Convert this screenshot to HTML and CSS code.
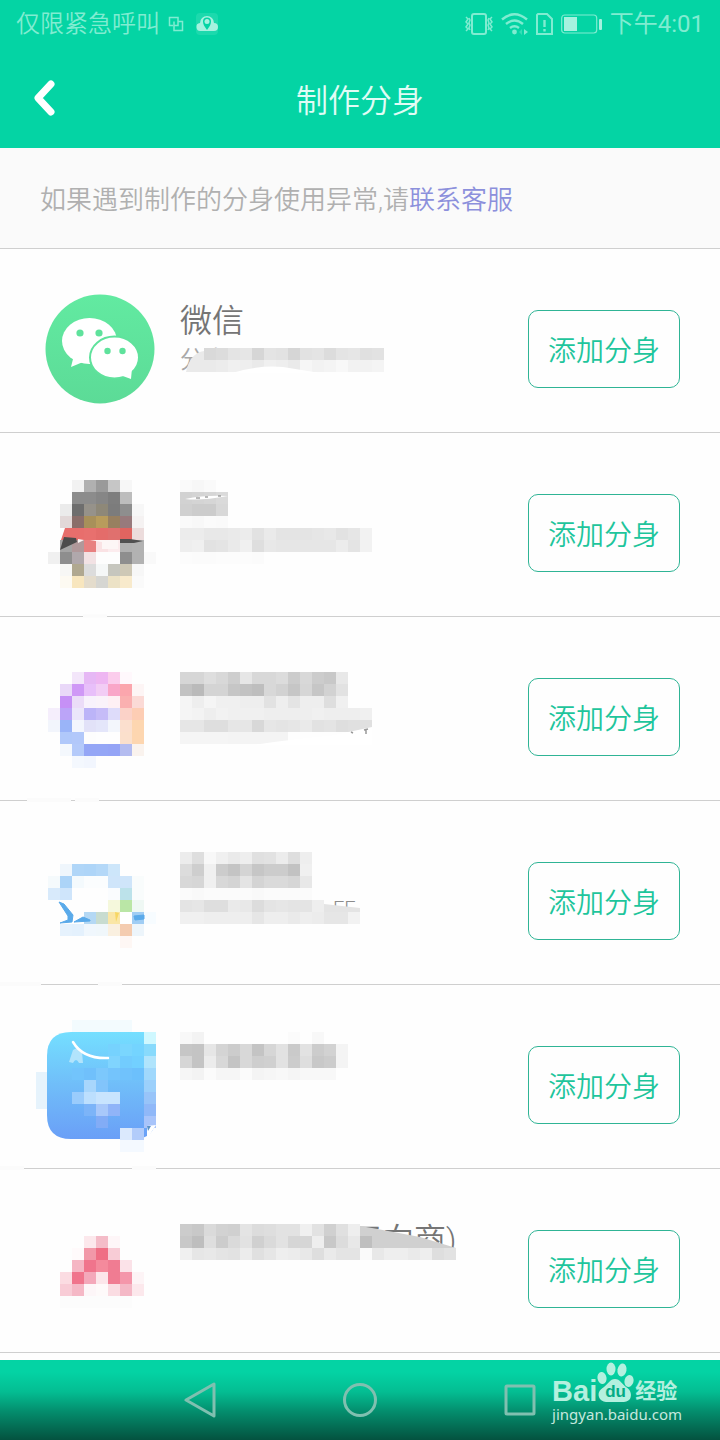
FILE: index.html
```html
<!DOCTYPE html>
<html lang="zh-CN">
<head>
    <meta charset="UTF-8">
    <meta name="viewport" content="width=device-width, initial-scale=1.0">
    <title>制作分身</title>
    <link rel="stylesheet" href="styles.css">
</head>
<body>
    <header class="header">
        <div class="status-bar">
            <span>仅限紧急呼叫</span>
            <svg class="status-copy" width="16" height="16" viewBox="0 0 16 16" fill="none" stroke="currentColor" stroke-width="1.5">
                <path d="M5 9.500H1.500V1.500H10V5.500H14.500V14.500H6V9.500M10 5.500V9.500H6V5.500"/>
            </svg>
            <svg width="22" height="22" viewBox="0 0 22 22">
                <rect width="22" height="22" rx="4" fill="#1cd9ad"/>
                <path d="M5 18a4 4 0 0 1-1-8 7 7 0 0 1 14 0 4 4 0 0 1 0 8z" fill="#a5f2df"/>
                <path d="M11 17C8 13 7 11 7 8.500a4 4 0 0 1 8 0C15 11 14 13 11 17z" fill="#04d4a4"/>
                <circle cx="11" cy="8.500" r="2.500" fill="#a5f2df"/>
            </svg>
            <div class="status-right">
                <svg width="28" height="24" viewBox="0 0 28 24" fill="none" stroke="currentColor" stroke-width="2">
                    <rect x="7" y="2" width="14" height="20" rx="2"/>
                    <path d="M1 5l2 2-2 3 2 2-2 3 2 2-2 2M4 6l1 2-1 3 1 2-1 3 1 2M27 5l-2 2 2 3-2 2 2 3-2 2 2 2M24 6l-1 2 1 3-1 2 1 3-1 2" stroke-width="1.5"/>
                </svg>
                <svg width="27" height="24" viewBox="0 0 27 24" fill="none" stroke="currentColor" stroke-width="2.400">
                    <path d="M1 7.500Q13.500-3 26 7.500M5 12Q13.500 5 22 12M9 16Q13.500 12.500 18 16"/>
                    <circle cx="13.500" cy="20" r="2.400" fill="currentColor" stroke="none"/>
                    <path d="M21 17l-3 3 3 3z" fill="currentColor" stroke="none" opacity=".4"/>
                    <path d="M23 17l4 3-4 3z" fill="currentColor" stroke="none"/>
                </svg>
                <svg width="17" height="24" viewBox="0 0 17 24" fill="none" stroke="currentColor" stroke-width="2">
                    <path d="M2 2H11L16 7V22H1V3z"/>
                    <path d="M8.500 8v7M8.500 17v2.500" stroke-width="2.400"/>
                </svg>
                <svg width="41" height="24" viewBox="0 0 41 24">
                    <rect x=".7" y="3" width="35" height="18" rx="3" fill="none" stroke="currentColor" stroke-width="1.200"/>
                    <rect x="3" y="5" width="13" height="14" fill="#a5f2df"/>
                    <rect x="38" y="7" width="3" height="11" rx="1" fill="#a5f2df"/>
                </svg>
                <span class="time">下午4:01</span>
            </div>
        </div>
        <div class="title-bar">
            <button class="back" aria-label="返回">
                <svg width="24" height="38" viewBox="0 0 24 38" fill="none" stroke="#fff" stroke-width="7" stroke-linecap="round" stroke-linejoin="round">
                    <path d="M18 5L5 19 18 33"/>
                </svg>
            </button>
            <h1>制作分身</h1>
        </div>
    </header>

    <p class="notice">如果遇到制作的分身使用异常,请<a href="#">联系客服</a></p>

    <ul class="app-list">
        <li class="app">
            <svg class="app-icon" viewBox="0 0 132 167">
                <defs>
                    <linearGradient id="green" x2="0" y2="1">
                        <stop offset="0" stop-color="#62eaa1"/>
                        <stop offset="1" stop-color="#5cdb97"/>
                    </linearGradient>
                </defs>
                <circle cx="64" cy="84" r="54.500" fill="url(#green)"/>
                <ellipse cx="53.500" cy="76" rx="27.500" ry="23" fill="#fff"/>
                <path d="M38 90l-3 12 12-5z" fill="#fff"/>
                <ellipse cx="78.500" cy="92.500" rx="24.500" ry="21" fill="#fff" stroke="#5fe29c" stroke-width="2"/>
                <path d="M96 103l-1 11-11-4z" fill="#fff"/>
                <g fill="#5fe29c">
                    <circle cx="44" cy="68" r="3.600"/>
                    <circle cx="63" cy="68" r="3.600"/>
                    <circle cx="71.500" cy="86" r="3.200"/>
                    <circle cx="86.500" cy="86" r="3.200"/>
                </g>
            </svg>
            <div class="app-info">
                <h2>微信</h2>
                <p>分身</p>
                <svg class="cover" viewBox="0 0 300 167">
                    <path d="M6 107Q10 88 24 86H48V107z" fill="#eaeaea"/>
                    <g data-mosaic="wechatText"></g>
                    <path d="M52 108Q78 100 103 102L140 108z" fill="#fff"/>
                </svg>
            </div>
            <button class="add">添加分身</button>
        </li>
        <li class="app">
            <svg class="app-icon" viewBox="0 0 132 167">
                <g data-mosaic="penguin"></g>
                <path d="M24 79H29L24 91z" fill="#fff"/>
                <path d="M29 79H37V91H25z" fill="#e86e6c"/>
                <path d="M28 88L40 89 41 93 24 101z" fill="#4c4c4c"/>
                <path d="M84 90H94L107 92 98 94H84z" fill="#505050"/>
                <path d="M42 90L48 91 42 94zM54 91H82V100H66V93z" fill="#fdf6f6"/>
                <path d="M47 167H71" stroke="#fbfbfb" stroke-width="3"/>
            </svg>
            <div class="app-info">
                <svg class="cover" viewBox="0 0 300 167">
                    <g data-mosaic="penguinText"></g>
                    <path d="M5 50Q20 52 48 47Q25 46 5 50z" fill="#fff"/>
                    <path d="M16 49h4M25 48h3M38 47h3" stroke="#777"/>
                </svg>
            </div>
            <button class="add">添加分身</button>
        </li>
        <li class="app">
            <svg class="app-icon" viewBox="0 0 132 167">
                <g data-mosaic="ring"></g>
                <path d="M-9 167H35M39 167H63" stroke="#fbfbfb" stroke-width="4"/>
            </svg>
            <div class="app-info">
                <svg class="cover" viewBox="0 0 300 167">
                    <g data-mosaic="ringText"></g>
                    <path d="M74 112Q120 105 150 103L192 94V112z" fill="#fff"/>
                    <path d="M171 99l2 1M184 97l4-1M186 97v4" stroke="#999" stroke-width="1.500"/>
                </svg>
            </div>
            <button class="add">添加分身</button>
        </li>
        <li class="app">
            <svg class="app-icon" viewBox="0 0 132 167">
                <g data-mosaic="bubble"></g>
                <path d="M23 85L28 87 37 98 36 105 24 106 32 103 32 99zM38 105L47 100 54 103V104zM98 99L108 98V102L99 103z" fill="#5aaaea" stroke="#5aaaea"/>
                <path d="M79 95l4 1-3 9z" fill="#f6d764"/>
                <path d="M-36 167H5M62 167H86" stroke="#fbfbfb" stroke-width="4"/>
            </svg>
            <div class="app-info">
                <svg class="cover" viewBox="0 0 300 167">
                    <text class="cover-sub" x="153" y="99">FF</text>
                    <g data-mosaic="bubbleText"></g>
                    <path d="M144 87L180 91V95H144z" fill="#e4e4e4"/>
                </svg>
            </div>
            <button class="add">添加分身</button>
        </li>
        <li class="app">
            <svg class="app-icon" viewBox="0 0 132 167">
                <defs>
                    <linearGradient id="blue" x2="0" y2="1">
                        <stop offset="0" stop-color="#74dfff"/>
                        <stop offset=".5" stop-color="#70bdf9"/>
                        <stop offset="1" stop-color="#6a9ff7"/>
                    </linearGradient>
                </defs>
                <path d="M36 19H96V31H36z" fill="#f3fbfe"/>
                <path d="M0 71H12V108H0z" fill="#e6f3fc"/>
                <path d="M35 31H120V114Q120 138 98 138H35Q11 138 11 114V55Q11 31 35 31z" fill="url(#blue)"/>
                <g data-mosaic="dog"></g>
                <path d="M33 61L37 49 41 47 46 51 47 62H43Q40 56 37 62z" fill="#b2e4fc"/>
                <path d="M37 41Q47 58 72 57" fill="none" stroke="#fff" stroke-width="2.500" stroke-linecap="round"/>
                <path d="M111 125L120 124 111 138z" fill="#fff"/>
                <path d="M111 125l4 0-3 5z" fill="#5a92c8"/>
                <path d="M-36 167H-12M96 167H120" stroke="#fbfbfb" stroke-width="4"/>
            </svg>
            <div class="app-info">
                <svg class="cover" viewBox="0 0 300 167">
                    <g data-mosaic="dogText"></g>
                </svg>
            </div>
            <button class="add">添加分身</button>
        </li>
        <li class="app">
            <svg class="app-icon" viewBox="0 0 132 167">
                <g data-mosaic="peak"></g>
            </svg>
            <div class="app-info">
                <svg class="cover" viewBox="0 0 300 167">
                    <text class="cover-name" x="170" y="66">天向商)</text>
                    <g data-mosaic="peakText"></g>
                    <path d="M180 41L192 43 240 52 276 63H192V51H180z" fill="#d0d0d0"/>
                </svg>
            </div>
            <button class="add">添加分身</button>
        </li>
    </ul>

    <footer class="nav-bar">
        <button aria-label="返回">
            <svg width="36" height="36" viewBox="0 0 36 36"><path d="M32 2V34L4 18z"/></svg>
        </button>
        <button aria-label="主页">
            <svg width="36" height="36" viewBox="0 0 36 36"><circle cx="18" cy="18" r="15.500"/></svg>
        </button>
        <button aria-label="最近任务">
            <svg width="36" height="36" viewBox="0 0 36 36"><rect x="4" y="4" width="28" height="28" rx="1"/></svg>
        </button>
        <div class="watermark">
            <div class="brand">
                <span class="brand-bai">Bai</span>
                <span class="paw">
                    <svg width="38" height="42" viewBox="0 0 38 42" fill="currentColor">
                        <ellipse cx="5" cy="16" rx="4.500" ry="6" transform="rotate(-10 5 16)"/>
                        <ellipse cx="14" cy="7" rx="4.500" ry="6.500"/>
                        <ellipse cx="25" cy="8" rx="4.500" ry="6.500" transform="rotate(10 25 8)"/>
                        <ellipse cx="32" cy="19" rx="4.500" ry="6" transform="rotate(15 32 19)"/>
                        <path d="M18 17C23 17 25 22 29 25C34 28 35 33 33 37C30 41 25 40 18 40S6 41 3 37C0 32 2 28 7 25C11 22 13 17 18 17z"/>
                    </svg>
                    <span class="paw-text">du</span>
                </span>
                <span class="brand-cn">经验</span>
            </div>
            <div class="site">jingyan.baidu.com</div>
        </div>
    </footer>

    <script src="mosaic.js"></script>
</body>
</html>
```

FILE: styles.css
```css
* {
    box-sizing: border-box;
}
body {
    margin: 0;
    min-height: 100vh;
    display: flex;
    flex-direction: column;
    font-family: Roboto, "Noto Sans CJK SC", sans-serif;
    font-weight: 350;
    background-color: #fefefe;
}
h1, h2, p, ul {
    margin: 0;
    padding: 0;
    font-weight: 350;
}
button {
    font-family: inherit;
    font-weight: inherit;
    background: none;
    border: none;
    padding: 0;
    cursor: pointer;
}
svg {
    display: block;
    flex-shrink: 0;
}
.header {
    background-color: #04d4a4;
}
.status-bar {
    display: flex;
    align-items: center;
    gap: 8px;
    height: 48px;
    padding: 0 16px;
    font-size: 24px;
    line-height: 24px;
    color: #80ecd1;
}
.status-copy {
    margin-right: 4px;
}
.status-right {
    display: flex;
    align-items: center;
    gap: 8px;
    margin-left: auto;
}
.time {
    font-weight: 400;
}
.title-bar {
    display: grid;
    grid-template-columns: 60px 1fr 60px;
    align-items: center;
    height: 100px;
}
.back {
    justify-self: end;
    padding-right: 3px;
}
.title-bar h1 {
    text-align: center;
    font-size: 32px;
    color: #e0fcf5;
}
.notice {
    padding: 4px 40px 0;
    line-height: 96px;
    font-size: 26px;
    color: #b0b0b0;
    background-color: #fafafa;
    border-bottom: 1px solid #cfcfcf;
}
.notice a {
    color: #8c90dc;
    text-decoration: none;
}
.app-list {
    flex: 1;
    list-style: none;
}
.app {
    display: flex;
    align-items: center;
    height: 184px;
    padding: 16px 40px 0 36px;
    border-bottom: 1px solid #cfcfcf;
}
.app-icon {
    width: 132px;
    height: 167px;
    margin-right: 12px;
    overflow: visible;
}
.app-info {
    position: relative;
    flex: 1;
    align-self: stretch;
    padding-top: 36px;
}
.app-info h2 {
    font-size: 32px;
    line-height: 40px;
    color: #757575;
}
.app-info p {
    font-size: 24px;
    line-height: 38px;
    color: #a8a8a8;
}
/* blurred-out names and descriptions */
.cover {
    position: absolute;
    top: 0;
    left: 0;
    width: 300px;
    height: 167px;
    overflow: visible;
}
.cover-name {
    font-size: 32px;
    fill: #757575;
}
.cover-sub {
    font-size: 20px;
    fill: #8c8c8c;
}
.add {
    width: 152px;
    height: 78px;
    font-size: 28px;
    color: #1ec59c;
    border: 1px solid #2fb495;
    border-radius: 10px;
}
.nav-bar {
    position: relative;
    display: flex;
    justify-content: center;
    align-items: center;
    gap: 124px;
    height: 80px;
    background: linear-gradient(#04d3a4 15%, #04bd92 40%, #048c6c 65%, #04523f);
}
.nav-bar button svg {
    fill: none;
    stroke: #80c0b0;
    stroke-width: 3;
    stroke-linejoin: round;
}
.watermark {
    position: absolute;
    right: 38px;
    top: 2px;
    color: #b4f0df;
}
.brand {
    display: flex;
    align-items: flex-end;
    height: 42px;
    margin-bottom: 2px;
    font-weight: 700;
}
.brand-bai {
    font-family: "Liberation Sans", Arial, sans-serif;
    font-size: 29px;
    line-height: 26px;
}
.brand-cn {
    font-size: 21px;
    line-height: 26px;
}
.paw {
    position: relative;
}
.paw-text {
    position: absolute;
    left: 8px;
    bottom: 4px;
    font-family: "Liberation Sans", Arial, sans-serif;
    font-size: 17px;
    line-height: 16px;
    color: #04ab85;
}
.site {
    font-family: "Noto Sans", sans-serif;
    font-weight: 400;
    font-size: 15px;
    line-height: 16px;
    color: #c4e8de;
}
```

FILE: mosaic.js
```js
// Pixelated icons and texts, 12px cells.
// Two digits are a grey level, six a full colour, "-" leaves the cell empty.
const CELL = 12;

const mosaics = {
    wechatText: { x: 12, y: 83, rows: [
        "- d9 dc e4 e6 d6 e4 e2 d6 e2 e4 dc e4 e6 e0 e2",
        "- ea ec f0 ee ea f0 ee ea f6 f2 f4 f8 f2 f2 f4"
    ] },
    penguin: { x: 12, y: 31, rows: [
        "- - f2 b0 9a c6 f7",
        "- - 8c 8c 86 7e bd",
        "- eb 6e 96928a 8e8878 7c 8e f7",
        "- e2d8d8 8a6e6a a8905a b89c5c 988060 987a7c f5f2f2",
        "- - e86e6c e8706e e46c6a e0706e e06460 ecdcdc",
        "- a4 b0989a e88080 fae2e4 fcecee b0 b2",
        "f0 8e b0a8ac f2e2e4 fd fd 8e b2 f9",
        "- f7f7f5 b0a890 dc f5f7f7 c6c6be cec8b6 f7",
        "- fdfaf2 f8e6be e4dccc d6d6d2 ece2c6 f8eacc fa"
    ] },
    penguinText: { x: 0, y: 31, rows: [
        "fa f7 fa",
        "d2 d4 d6 da",
        "d0 cc cc d8",
        "fa f8 fb fa",
        "ec ec e8 e8 ea ec e2 ea e4 e4 e4 e6 e8 e2 e6 f2",
        "ee f0 e2 e4 ea f0 de e8 e6 e6 e6 e6 e6 ec e4 f2",
        "fc fb fb fc fc fc fb"
    ] },
    ring: { x: 12, y: 39, rows: [
        "- - f3e6fa e6b8f5 eeb6f2 fbcdec fff8fc",
        "- e9d8f8 cf98f6 e8bffa f2cdf5 f9a6c8 fba6ad fdf5f5",
        "- c690f6 ebdcf8 f8f2fc faf3fa fef0f4 fab0b0 fbdad6",
        "f5eefc bba4f8 ebe6fa bcb4f8 c6bcf8 dedcfa fbd2c8 fdcdb4",
        "f2f5fc 9ab4f8 f3f6fd e2e2f8 e4e6fa f3f6fc fbdfce fdd6b0",
        "- b0c8fa b2c8fa fd fe fe fbe0cc fdd6b0",
        "- f4f8fd b4cafa 94a6f6 94a6f6 94a4f6 b4bcf0 faf3ee",
        "- - f4f8fe f2f6fe"
    ] },
    ringText: { x: 0, y: 39, rows: [
        "d6 d6 de d8 ce e6 d8 d8 dc cc d8 cc c8 e8",
        "c2 ba d4 d4 c6 c2 be d8 d2 c6 d6 c6 d2 e2",
        "f5 ee f5 f0 f0 ee ee e2 ee e4 ee ee de f0",
        "f5 f3 ee f2 f0 f0 f0 ee ee ee ee f0 ee ee ee f0",
        "e6 e6 de de e6 e6 d8 e6 e4 e6 ea e2 e4 de e0 e0",
        "f5 f5 f5 f5 f4 f4 f4 f4 f4"
    ] },
    bubble: { x: 12, y: 47, rows: [
        "- eff6fc b0d6f8 aed5f8 b4d8f8 cde6fa",
        "f5fafc acd4f8 f4fafd fbfdfe fbfdfe cfe5fa cfe5fa f9fcfc",
        "d8eafb cfe5fb - - - fafcfe bce2ea f9fcfc",
        "- - - - - f5f8dc bae6a6 eff8f4",
        "- - - b4d8f4 c8dcd0 fae6a6 ff a0cdf4 f7fcff",
        "- e6f2fd e4f1fd f0f7fd f0f7fb faf0e0 f4ccb0 edf5fb",
        "- - - - - - fef7f4"
    ] },
    bubbleText: { x: 0, y: 35, rows: [
        "ec de f8 f0 ea ee e0 e2 ec de ee",
        "dc ce f0 cc c4 d4 c6 cc cc c2 f0",
        "d8 d6 f0 d8 d4 e4 d4 da da d6 e8",
        "fb f9 fb fb fb fb f9 fb fb fb fb",
        "e4 e6 de de ea e8 dc e4 e6 e4 e4 ee",
        "f0 f0 ee ee ee ee e6 ee ee ea ee ec e6 e6 f2"
    ] },
    dog: { x: 36, y: 31, rows: [
        "- - - - - - cff8ff",
        "- - - 76d2fe 7ad6fe 74d4ff 88dafc",
        "- - - 80d4fe 72ccfe 72d0ff b0e4fc",
        "72c4fc 70c0fb 7cc8fc 74c4fc 70c2fc 6cc0fc a0d8fc",
        "- a8d6fc 82c4fb - - - 9cd0fb",
        "9accfc bcdffe c8e4fe c8e4fe - - 98c4f9",
        "- 7cb4f8 a8c8fa 90b4f8 - - 90b8f8",
        "- - 82acf6 - - - a8c4fa",
        "- - - - dbe9fd b2ccfa",
        "- - - - f4f9ff f4f9ff"
    ] },
    dogText: { x: 0, y: 31, rows: [
        "f8 f3 - - - - - - - fb - f8",
        "c6 c4 e6 d4 cc d8 c4 d6 e2 ca e2 cc d2 f4",
        "d6 c4 ec d8 c4 d8 ce d0 e2 cc de c8 cc f4",
        "f6 f3 fb f6 f6 fb f4 f6 f8 f5 f8 f8 f8"
    ] },
    peak: { x: 24, y: 51, rows: [
        "- - fce8ec f4bcc8 fef6f8",
        "- fffafb f298a8 ef6e84 f8ccd6",
        "- f5b6c4 f0748c f48a9c f07c92 fbe2e8",
        "fbdce2 f0748c f4a8ba fce6ea f07c92 f496aa fdf4f6",
        "f8ccd6 f5b8c6 fdf6f8 fefafa fadce2 f4b8c6 fce8ec",
        "fc fc fc fc fc fc"
    ] },
    peakText: { x: 0, y: 39, rows: [
        "cc c8 da d2 d0 e4 dc de e2 e2 f0 e2 d0 e0 ee",
        "c8 be de cc da e2 d0 da e2 d6 d6 ee c8 dc e8 bf",
        "f0 e6 e8 e4 e2 ec e0 e6 ee ec e8 de ea e4 e4 fa e8 ee ee ea ee de e2"
    ] }
};

document.querySelectorAll("[data-mosaic]").forEach(group => {
    const mosaic = mosaics[group.dataset.mosaic];
    mosaic.rows.forEach((row, r) => {
        row.split(" ").forEach((value, c) => {
            if (value === "-") {
                return;
            }
            const rect = document.createElementNS("http://www.w3.org/2000/svg", "rect");
            rect.setAttribute("x", mosaic.x + c * CELL);
            rect.setAttribute("y", mosaic.y + r * CELL);
            rect.setAttribute("width", CELL);
            rect.setAttribute("height", CELL);
            rect.setAttribute("fill", "#" + (value.length === 2 ? value.repeat(3) : value));
            group.appendChild(rect);
        });
    });
});
```
